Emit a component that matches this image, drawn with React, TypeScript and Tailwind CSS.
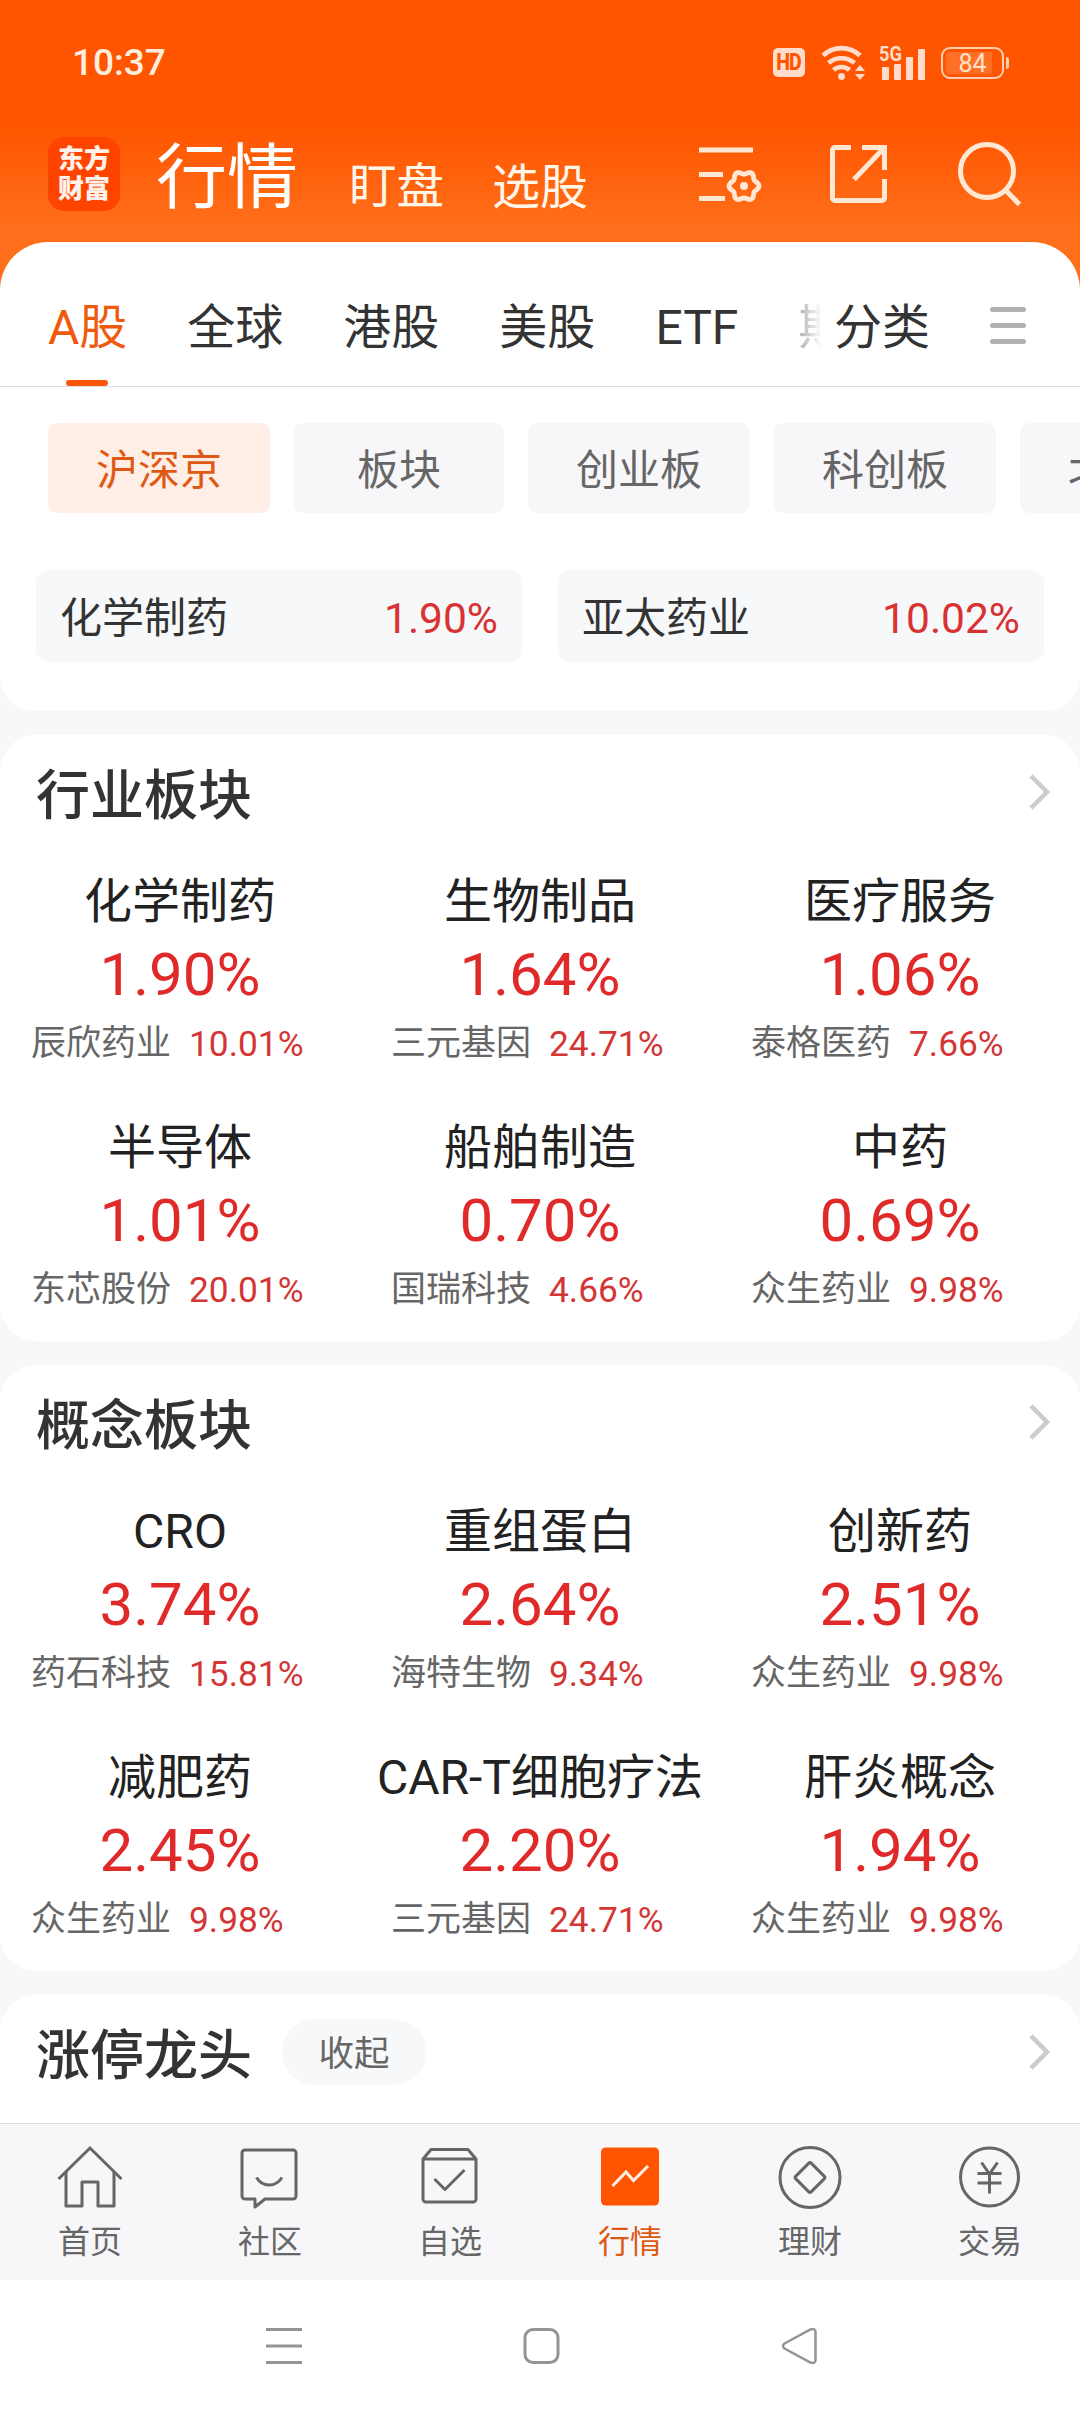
import React from "react";

type Sector = {
  name: string;
  change: string;
  stock: string;
  stockChange: string;
};

const industries: Sector[] = [
  { name: "化学制药", change: "1.90%", stock: "辰欣药业", stockChange: "10.01%" },
  { name: "生物制品", change: "1.64%", stock: "三元基因", stockChange: "24.71%" },
  { name: "医疗服务", change: "1.06%", stock: "泰格医药", stockChange: "7.66%" },
  { name: "半导体", change: "1.01%", stock: "东芯股份", stockChange: "20.01%" },
  { name: "船舶制造", change: "0.70%", stock: "国瑞科技", stockChange: "4.66%" },
  { name: "中药", change: "0.69%", stock: "众生药业", stockChange: "9.98%" },
];

const concepts: Sector[] = [
  { name: "CRO", change: "3.74%", stock: "药石科技", stockChange: "15.81%" },
  { name: "重组蛋白", change: "2.64%", stock: "海特生物", stockChange: "9.34%" },
  { name: "创新药", change: "2.51%", stock: "众生药业", stockChange: "9.98%" },
  { name: "减肥药", change: "2.45%", stock: "众生药业", stockChange: "9.98%" },
  { name: "CAR-T细胞疗法", change: "2.20%", stock: "三元基因", stockChange: "24.71%" },
  { name: "肝炎概念", change: "1.94%", stock: "众生药业", stockChange: "9.98%" },
];

const markets = ["A股", "全球", "港股", "美股", "ETF", "期"];
const boards = ["沪深京", "板块", "创业板", "科创板", "北交所"];

const StatusBar = () => (
  <div className="flex h-[125px] items-center justify-between pl-[72px] pr-[71px]">
    <span className="text-[37px] font-medium leading-none text-[#ffeedd]">10:37</span>
    <div className="flex items-center text-[#ffdccb]">
      <div className="flex h-[29px] w-8 items-center justify-center rounded-[5px] bg-[#ffdccb]">
        <span className="text-[23px] font-extrabold leading-none tracking-[-1px] text-[#ff5500] scale-x-[0.85]">
          HD
        </span>
      </div>
      <svg className="ml-4 h-9 w-11" viewBox="0 0 44 36" fill="none" stroke="currentColor" strokeWidth="4.6">
        <path d="M2 10.500a27 27 0 0 1 37 0" />
        <path d="M7.500 18a20 20 0 0 1 26 0" />
        <path d="M12.500 25a12 12 0 0 1 16 0" />
        <circle cx="20.500" cy="31.500" r="3.400" fill="currentColor" stroke="none" />
        <path d="M39 20l5 6h-10zM39 35l5-6h-10z" fill="currentColor" stroke="none" />
      </svg>
      <div className="relative ml-[14px] h-9 w-[46px]">
        <span className="absolute -top-px left-0 origin-left scale-x-[0.87] text-[21px] font-bold leading-none">
          5G
        </span>
        <svg className="h-9 w-[46px]" viewBox="0 0 46 36" fill="currentColor">
          <rect x="3" y="22" width="7" height="13" rx="1" />
          <rect x="15" y="19" width="7" height="16" rx="1" />
          <rect x="27" y="12" width="7" height="23" rx="1" />
          <rect x="39" y="4" width="7" height="31" rx="1" />
        </svg>
      </div>
      <div className="ml-4 flex h-8 w-[63px] rounded-[9px] border-[2.5px] border-[#ffcfb0] p-[3px]">
        <div className="flex h-full w-[46px] items-center justify-center rounded-[3px] bg-[#ff7026] pl-[7px] pt-px text-[25px] leading-none text-[#ffe2cc]">
          84
        </div>
      </div>
      <div className="ml-[2px] h-3 w-[3px] rounded-r bg-[#ffcfb0]" />
    </div>
  </div>
);

// outline of a six-lobed cog around (cx, cy)
const cogPath = (cx: number, cy: number) => {
  const points: string[] = [];
  for (let deg = 0; deg < 360; deg += 5) {
    const a = (deg * Math.PI) / 180;
    const r = 13.4 + 1.6 * Math.cos(6 * a);
    points.push(`${(cx + r * Math.cos(a)).toFixed(2)} ${(cy + r * Math.sin(a)).toFixed(2)}`);
  }
  return `M${points.join("L")}Z`;
};

const Header = () => (
  <header className="h-[290px] bg-[linear-gradient(#ff5500_125px,#ff6e1a_225px)]">
    <StatusBar />
    <div className="flex h-[98px] items-center pl-12 text-[#fff6ea]">
      <div className="flex h-[74px] w-[72px] flex-col items-center justify-center rounded-2xl bg-[#ff4400] text-[26px] font-black leading-[30px] text-[#fff3ec]">
        <span>东方</span>
        <span>财富</span>
      </div>
      <h1 className="ml-9 pt-[7px] text-[71px] leading-none text-white">行情</h1>
      <span className="ml-[51px] mt-[27px] text-[47.5px] leading-none">盯盘</span>
      <span className="ml-12 mt-[27px] text-[48px] leading-none">选股</span>
      <svg className="ml-[111px] h-[66px] w-[66px]" viewBox="0 0 66 66" fill="none" stroke="#ffe8d3" strokeWidth="5">
        <path d="M0 9h54M0 33.500h24M0 57.500h26" />
        <path d={cogPath(45, 45)} strokeWidth="4.800" strokeLinejoin="round" />
        <circle cx="45" cy="45" r="4" fill="#ffe8d3" stroke="none" />
      </svg>
      <svg className="ml-[64px] h-[60px] w-[60px]" viewBox="0 0 60 60" fill="none" stroke="#ffe8d3" strokeWidth="5">
        <path d="M22 3.500H6A2.500 2.500 0 0 0 3.500 6v48A2.500 2.500 0 0 0 6 56.500h47a2.500 2.500 0 0 0 2.500-2.500V35" />
        <path d="M33 3.500h22.500V26M55 4L25 35.500" />
      </svg>
      <svg className="ml-[69px] h-16 w-16" viewBox="0 0 64 64" fill="none" stroke="#ffe8d3" strokeWidth="5">
        <circle cx="29" cy="29" r="26.500" />
        <path d="M47.500 48l14 14.500" />
      </svg>
    </div>
  </header>
);

const MarketTabs = () => (
  <nav className="flex h-[145px] items-center border-b border-[#dddddd] text-[48px] leading-none text-[#333333]">
    <div className="relative flex h-full w-[822px] shrink-0 items-center gap-[60px] overflow-hidden whitespace-nowrap pl-12 pt-7">
      {markets.map((m, i) => (
        <div key={m} className="relative flex h-full items-center">
          <span className={i === 0 ? "text-[#f05a0c]" : ""}>{m}</span>
          {i === 0 && (
            <div className="absolute bottom-0 left-[18px] h-[6px] w-[42px] rounded-full bg-[#fb5607]" />
          )}
        </div>
      ))}
      <div className="absolute right-0 top-0 h-full w-[48px] bg-linear-to-r from-white/20 to-white" />
    </div>
    <span className="ml-3 pt-7">分类</span>
    <div className="ml-[60px] flex w-9 flex-col gap-[11px] pt-[23px]">
      <div className="h-[5px] rounded-full bg-[#b0b0b0]" />
      <div className="h-[5px] rounded-full bg-[#b0b0b0]" />
      <div className="h-[5px] rounded-full bg-[#b0b0b0]" />
    </div>
  </nav>
);

const HotItem = ({ name, change }: { name: string; change: string }) => (
  <div className="flex h-[92px] w-[486px] items-center justify-between rounded-xl bg-[#f7f8fa] px-6 pt-[6px] text-[42px] leading-none">
    <span className="text-[#333333]">{name}</span>
    <span className="text-[42.5px] text-[#d93232]">{change}</span>
  </div>
);

const Chevron = () => (
  <svg className="h-9 w-[22px]" viewBox="0 0 22 36" fill="none" stroke="#cccccc" strokeWidth="4.500">
    <path d="M2 1.800L18 18 2 34.200" />
  </svg>
);

const CardTitle = ({ title, children }: { title: string; children?: React.ReactNode }) => (
  <div className="flex h-[114px] items-center pl-9 pr-[29px]">
    <h2 className="pt-[9px] text-[54px] font-medium leading-none text-[#333333]">{title}</h2>
    {children}
    <div className="ml-auto">
      <Chevron />
    </div>
  </div>
);

const SectorCard = ({ title, sectors }: { title: string; sectors: Sector[] }) => (
  <section className="h-[606px] rounded-[36px] bg-white">
    <CardTitle title={title} />
    <div className="grid grid-cols-3">
      {sectors.map((s) => (
        <div key={s.name} className="flex h-[246px] flex-col pt-[26px]">
          <div className="h-[54px] whitespace-nowrap text-center text-[48px] leading-[54px] text-[#222222]">
            {s.name}
          </div>
          <div className="mt-[11px] h-[70px] text-center text-[60px] leading-[70px] text-[#e02a2a]">{s.change}</div>
          <div className="mt-[14px] flex h-10 pl-[31px] text-[35px] leading-10">
            <span className="text-[#666666]">{s.stock}</span>
            <span className="ml-[18px] text-[35.3px] text-[#d43535]">{s.stockChange}</span>
          </div>
        </div>
      ))}
    </div>
  </section>
);

const HomeIcon = () => (
  <svg className="size-[66px]" viewBox="0 0 66 66" fill="none" stroke="#666666" strokeWidth="3">
    <path d="M1.500 36L33 5l31.500 31" />
    <path d="M9 29v34h16V39h16v24h16V29" strokeLinejoin="round" />
  </svg>
);

const CommunityIcon = () => (
  <svg className="size-[66px]" viewBox="0 0 66 66" fill="none" stroke="#666666" strokeWidth="3" strokeLinejoin="round">
    <path d="M8 7h48a3 3 0 0 1 3 3v43a3 3 0 0 1-3 3H28l-10 8v-8H8a3 3 0 0 1-3-3V10a3 3 0 0 1 3-3z" />
    <path d="M19.500 34.500c6 10 19 10 25.500 0" />
  </svg>
);

const WatchlistIcon = () => (
  <svg className="size-[66px]" viewBox="0 0 66 66" fill="none" stroke="#666666" strokeWidth="3" strokeLinejoin="round">
    <path d="M6 16l8-9.500h37L59 16v40a3 3 0 0 1-3 3H9a3 3 0 0 1-3-3zM6 16h53" />
    <path d="M17.500 36L28 46.500 47.500 27" />
  </svg>
);

const QuotesIcon = () => (
  <svg className="size-[66px]" viewBox="0 0 66 66" fill="none">
    <rect x="4" y="4.500" width="58" height="58" rx="4.500" fill="#ff5500" />
    <path d="M15.500 43l13.500-14 7.500 8.500L51 23" stroke="#fff0e6" strokeWidth="3" />
  </svg>
);

const WealthIcon = () => (
  <svg className="size-[66px]" viewBox="0 0 66 66" fill="none" stroke="#666666" strokeWidth="3" strokeLinejoin="round">
    <circle cx="33" cy="34.500" r="30" />
    <rect x="22" y="23.500" width="22" height="22" rx="2" transform="rotate(45 33 34.500)" />
  </svg>
);

const TradeIcon = () => (
  <svg className="size-[66px]" viewBox="0 0 66 66" fill="none" stroke="#666666" strokeWidth="3">
    <circle cx="32.500" cy="34" r="29" />
    <path d="M24.500 19.500l8 11.500 8-11.500M20.500 30.500h24M20.500 40h24M32.500 30v20.500" />
  </svg>
);

const navItems = [
  { label: "首页", icon: <HomeIcon /> },
  { label: "社区", icon: <CommunityIcon /> },
  { label: "自选", icon: <WatchlistIcon /> },
  { label: "行情", icon: <QuotesIcon />, active: true },
  { label: "理财", icon: <WealthIcon /> },
  { label: "交易", icon: <TradeIcon /> },
];

const BottomNav = () => (
  <nav className="grid h-[157px] grid-cols-6 border-t border-[#dddddd] bg-[#f7f7fa]">
    {navItems.map((item) => (
      <div key={item.label} className="flex flex-col items-center pt-[19px]">
        {item.icon}
        <span
          className={`mt-[13px] text-[32px] leading-10 ${item.active ? "text-[#dd5a14]" : "text-[#666666]"}`}
        >
          {item.label}
        </span>
      </div>
    ))}
  </nav>
);

const SystemNav = () => (
  <div className="flex h-[132px] items-center bg-white pl-[265px]">
    <svg className="h-[38px] w-[38px]" viewBox="0 0 38 38" fill="none" stroke="#949494" strokeWidth="3">
      <path d="M1 2.500h36M1 19h36M1 35.500h36" />
    </svg>
    <svg className="ml-[219px] h-[38px] w-[38px]" viewBox="0 0 38 38" fill="none" stroke="#949494" strokeWidth="3">
      <rect x="3" y="2.500" width="33" height="33" rx="8" />
    </svg>
    <svg
      className="ml-[221px] h-[38px] w-[38px]"
      viewBox="0 0 38 38"
      fill="none"
      stroke="#949494"
      strokeWidth="2.500"
    >
      <path d="M3.500 16.500L29.500 2.500Q34.500 1 34.500 5v28Q34.500 37 29.500 35.500L3.500 21.500Q0.500 19 3.500 16.500z" />
    </svg>
  </div>
);

const App = () => {
  return (
    <div className="flex h-[2412px] w-[1080px] flex-col overflow-hidden bg-[#f7f8fa] font-['Roboto','Noto_Sans_CJK_SC',sans-serif]">
      <Header />
      <main className="-mt-12 flex flex-1 flex-col gap-6 overflow-hidden">
        <section className="h-[469px] shrink-0 rounded-t-[48px] rounded-b-[36px] bg-white">
          <MarketTabs />
          <div className="mt-9 flex gap-6 overflow-hidden pl-12">
            {boards.map((b, i) => (
              <button
                key={b}
                className={`flex h-[90px] min-w-[210px] shrink-0 items-center justify-center rounded-[9px] px-12 pt-[5px] text-[42px] leading-none ${
                  i === 0 ? "bg-[#ffeee6] text-[#de5a14]" : "bg-[#f7f7fa] text-[#666666]"
                }`}
              >
                {b}
              </button>
            ))}
          </div>
          <div className="mt-[57px] flex justify-between px-9">
            <HotItem name="化学制药" change="1.90%" />
            <HotItem name="亚太药业" change="10.02%" />
          </div>
        </section>
        <SectorCard title="行业板块" sectors={industries} />
        <SectorCard title="概念板块" sectors={concepts} />
        <section className="h-[180px] shrink-0 rounded-t-[36px] bg-white">
          <CardTitle title="涨停龙头">
            <button className="ml-[30px] flex h-[66px] w-36 items-center justify-center rounded-full bg-[#f7f8fa] pt-[5px] text-[35.5px] leading-none text-[#666666]">
              收起
            </button>
          </CardTitle>
        </section>
      </main>
      <BottomNav />
      <SystemNav />
    </div>
  );
};

export default App;
